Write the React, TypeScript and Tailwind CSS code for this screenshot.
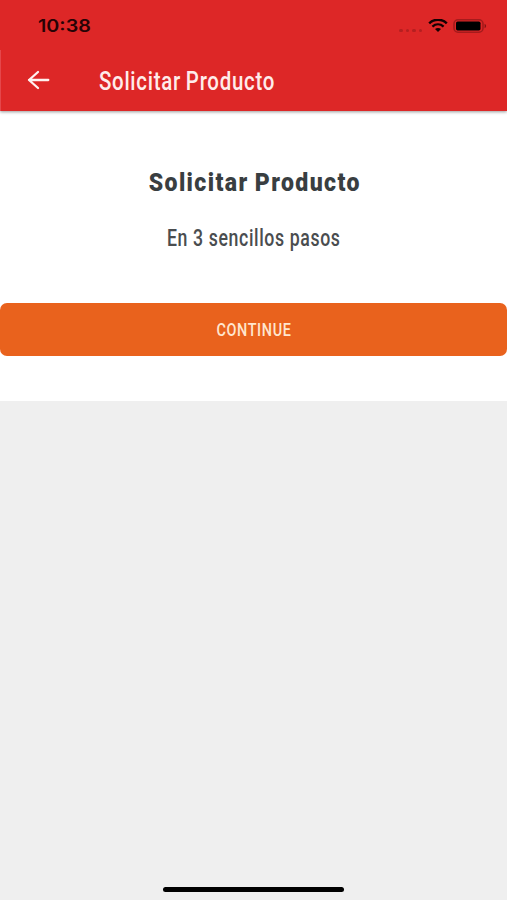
function StatusBar() {
  return (
    <div className="flex h-[50px] items-start justify-between pl-[38px] pr-[20px] pt-[16px] text-black">
      <span className="inline-block origin-left scale-x-[1.16] font-[Inter,sans-serif] text-[17px] font-semibold leading-[20px] text-[#260305]">
        10:38
      </span>
      <div className="flex items-start">
        <div className="mt-[12.5px] flex gap-[3px] pr-[6px]">
          <i className="size-[3.5px] rounded-full bg-[#b51f20]" />
          <i className="size-[3.5px] rounded-full bg-[#b51f20]" />
          <i className="size-[3.5px] rounded-full bg-[#b51f20]" />
          <i className="size-[3.5px] rounded-full bg-[#b51f20]" />
        </div>
        <svg className="mt-[3px] h-[13px] w-[20px]" viewBox="0 0 20 13" fill="none">
          <path d="M1.2 4.3C6.2-.4 13.8-.4 18.8 4.3" stroke="#120102" strokeWidth="2.5" />
          <path d="M4.4 7.6c3.3-2.9 7.9-2.9 11.2 0" stroke="#120102" strokeWidth="2.3" />
          <path d="M7 10.1c1.8-1.5 4.2-1.5 6 0L10 13z" fill="#120102" />
        </svg>
        <svg className="ml-[5px] mt-[2px] h-[16px] w-[34px]" viewBox="0 0 34 16">
          <rect x="1" y="1.8" width="29" height="12.4" rx="4" fill="none" stroke="#a51b1c" strokeWidth="1.6" />
          <rect x="3" y="3.6" width="24.5" height="8.8" rx="1.6" fill="#000" />
          <path d="M31.6 5.8c2 .8 2 3.6 0 4.4z" fill="#801315" />
        </svg>
      </div>
    </div>
  );
}

function AppBar() {
  return (
    <header className="flex h-[61px] items-center border-l border-l-[#e5474b]">
      <svg className="-mt-[2px] ml-[26px] h-[20px] w-[23px]" viewBox="0 0 23 20" fill="none" stroke="#fff2f0" strokeWidth="2.3" strokeLinecap="round" strokeLinejoin="round">
        <path d="M21.3 10H2M11 2L2 10l9 8" />
      </svg>
      <h1 className="ml-[48.5px] inline-block origin-left scale-x-[0.802] whitespace-nowrap font-[Roboto,sans-serif] text-[25.5px] font-medium leading-[30px] tracking-[0.9px] [word-spacing:-1px] text-[#ffeceb]">
        Solicitar Producto
      </h1>
    </header>
  );
}

export default function App() {
  return (
    <div className="flex h-[900px] w-[507px] flex-col overflow-hidden bg-[#efefef]">
      <div className="relative bg-[#dd2727] shadow-[0_1px_3px_rgba(0,0,0,0.4)]">
        <StatusBar />
        <AppBar />
      </div>
      <main className="flex h-[290px] flex-col items-center bg-white pt-[56px]">
        <h2 className="scale-x-[0.87] whitespace-nowrap pl-[2px] font-[Roboto,sans-serif] text-[26.5px] font-black leading-[30px] tracking-[1.6px] [word-spacing:-1px] text-[#393e41]">
          Solicitar Producto
        </h2>
        <p className="mt-[27px] scale-x-[0.77] whitespace-nowrap font-[Roboto,sans-serif] text-[23px] font-medium leading-[30px] tracking-[0.8px] text-[#4a4d4f]">
          En 3 sencillos pasos
        </p>
        <button className="mt-[49px] flex h-[53px] w-full items-center justify-center rounded-[7px] bg-[#e9621d]">
          <span className="inline-block scale-x-[0.8] font-[Roboto,sans-serif] text-[18px] font-medium tracking-[0.8px] text-[#ffe6cf]">
            CONTINUE
          </span>
        </button>
      </main>
      <div className="mt-auto flex justify-center pb-[8px]">
        <div className="h-[5.5px] w-[181px] rounded-full bg-black" />
      </div>
    </div>
  );
}
